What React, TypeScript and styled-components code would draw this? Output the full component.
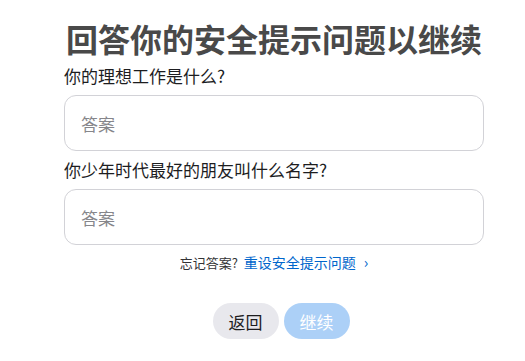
import React from 'react';
import styled, { createGlobalStyle } from 'styled-components';

const GlobalStyle = createGlobalStyle`
  html, body {
    margin: 0;
    padding: 0;
    background: #ffffff;
  }
  body {
    font-family: "Noto Sans CJK SC", "Noto Sans", sans-serif;
    color: #1d1d1f;
  }
`;

const Page = styled.div`
  width: 525px;
  height: 361px;
  box-sizing: border-box;
  padding: 16px 41px 0 64px;
  display: flex;
  flex-direction: column;
`;

const Title = styled.h1`
  margin: 0;
  font-size: 32px;
  line-height: 44px;
  font-weight: 700;
  color: #494949;
  text-align: center;
  white-space: nowrap;
`;

const Question = styled.label<{ $top: number }>`
  display: block;
  margin-top: ${({ $top }) => $top}px;
  font-size: 17px;
  line-height: 24px;
  color: #1d1d1f;
`;

const Field = styled.input`
  display: block;
  box-sizing: border-box;
  width: 420px;
  height: 56px;
  margin-top: 7px;
  padding: 0 16px;
  border: 1px solid #d2d2d7;
  border-radius: 12px;
  font-family: inherit;
  font-size: 17px;
  color: #1d1d1f;
  background: #fff;
  outline: none;

  &::placeholder {
    color: #86868b;
  }
`;

const Forgot = styled.div`
  margin-top: 7px;
  width: 420px;
  text-align: center;
  font-size: 13px;
  line-height: 20px;
  color: #333336;
`;

const ResetLink = styled.a`
  color: #0066cc;
  text-decoration: none;
  margin-left: 6px;
  font-size: 14px;
`;

const Chevron = styled.span`
  display: inline-block;
  margin-left: 8px;
  font-size: 15px;
  color: #0066cc;
`;

const Actions = styled.div`
  margin-top: 30px;
  width: 434px;
  display: flex;
  justify-content: center;
  gap: 5px;
`;

const Pill = styled.button<{ $primary?: boolean }>`
  height: 36px;
  min-width: 66px;
  padding: 0 15px;
  border: none;
  border-radius: 18px;
  font-family: inherit;
  font-size: 17px;
  background: ${({ $primary }) => ($primary ? '#acd0f7' : '#e8e8ed')};
  color: ${({ $primary }) => ($primary ? '#ffffff' : '#1d1d1f')};
  cursor: ${({ $primary }) => ($primary ? 'default' : 'pointer')};
`;

export default function App() {
  return (
    <>
      <GlobalStyle />
      <Page>
        <Title>回答你的安全提示问题以继续</Title>
        <Question $top={4}>你的理想工作是什么?</Question>
        <Field placeholder="答案" />
        <Question $top={7}>你少年时代最好的朋友叫什么名字?</Question>
        <Field placeholder="答案" />
        <Forgot>
          忘记答案?
          <ResetLink href="#">重设安全提示问题</ResetLink>
          <Chevron>›</Chevron>
        </Forgot>
        <Actions>
          <Pill>返回</Pill>
          <Pill $primary disabled>继续</Pill>
        </Actions>
      </Page>
    </>
  );
}
